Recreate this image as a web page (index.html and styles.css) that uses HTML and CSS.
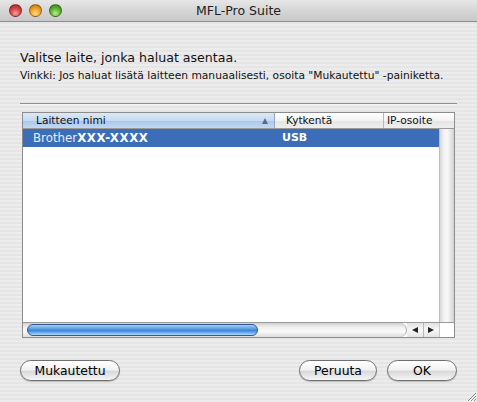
FILE: index.html
```html
<!DOCTYPE html>
<html>
<head>
<meta charset="utf-8">
<link rel="stylesheet" href="styles.css">
</head>
<body>
<div class="window">
  <div class="titlebar">
    <div class="lights">
      <span class="light red"></span>
      <span class="light yellow"></span>
      <span class="light green"></span>
    </div>
    <div class="title">MFL-Pro Suite</div>
  </div>
  <div class="content">
    <h1 class="heading">Valitse laite, jonka haluat asentaa.</h1>
    <p class="hint">Vinkki: Jos haluat lisätä laitteen manuaalisesti, osoita "Mukautettu" -painiketta.</p>
    <div class="sep"></div>
    <div class="table">
      <div class="thead">
        <div class="th sorted"><span>Laitteen nimi</span><span class="sortarrow"></span></div>
        <div class="th">Kytkentä</div>
        <div class="th last">IP-osoite</div>
      </div>
      <div class="tbody">
        <div class="list">
          <div class="row selected">
            <div class="td c1"><span class="light-txt">Brother</span><b>XXX-XXXX</b></div>
            <div class="td c2"><b>USB</b></div>
          </div>
        </div>
        <div class="vscroll"></div>
      </div>
      <div class="hbar">
        <div class="htrack"><div class="thumb"></div></div>
        <div class="arrows">
          <span class="arr left"></span>
          <span class="arr right"></span>
        </div>
        <div class="corner"></div>
      </div>
    </div>
    <div class="buttons">
      <button class="btn custom">Mukautettu</button>
      <div class="spacer"></div>
      <button class="btn cancel">Peruuta</button>
      <button class="btn ok">OK</button>
    </div>
  </div>
  <div class="grip">
    <svg width="12" height="12" viewBox="0 0 12 12">
      <path d="M11 3 L3 11 M11 6 L6 11 M11 9 L9 11" stroke="#8a8a8a" stroke-width="1"/>
      <path d="M11.8 3.8 L3.8 11.8 M11.8 6.8 L6.8 11.8" stroke="#ffffff" stroke-width="0.8"/>
    </svg>
  </div>
</div>
</body>
</html>
```
FILE: styles.css
```css
* { box-sizing: border-box; }
html, body { margin: 0; padding: 0; }
body {
  width: 477px;
  height: 402px;
  overflow: hidden;
  font-family: "DejaVu Sans", "Liberation Sans", sans-serif;
  color: #000;
}
.window {
  position: relative;
  width: 477px;
  height: 402px;
  background: repeating-linear-gradient(180deg, #ececec 0px, #ececec 2px, #e5e5e5 2px, #e5e5e5 4px);
}
.titlebar {
  position: relative;
  height: 22px;
  background: linear-gradient(180deg, #e6e6e6 0%, #d6d6d6 50%, #c8c8c8 100%);
  border-bottom: 1px solid #8e8e8e;
  display: flex;
  align-items: center;
}
.lights {
  display: flex;
  gap: 7px;
  padding-left: 9px;
}
.light {
  width: 13px;
  height: 13px;
  border-radius: 50%;
  border: 1px solid rgba(0,0,0,0.35);
}
.red { background: radial-gradient(circle at 50% 75%, #f7a0a0 0%, #d94b4b 45%, #9e1f22 100%); }
.yellow { background: radial-gradient(circle at 50% 75%, #ffe08a 0%, #f3a52b 45%, #b56a0a 100%); }
.green { background: radial-gradient(circle at 50% 75%, #b8f08c 0%, #63b63a 45%, #2d7a17 100%); }
.title {
  position: absolute;
  left: 0; right: 0; top: 3px;
  text-align: center;
  font-size: 12.5px;
  color: #222;
}
.content {
  padding: 28px 20px 0 20px;
}
.heading {
  margin: 0;
  font-weight: normal;
  font-size: 12.6px;
  line-height: 16px;
  color: #111;
}
.hint {
  margin: 3px 0 0 0;
  font-size: 10.7px;
  line-height: 14px;
  color: #111;
  white-space: nowrap;
}
.sep {
  margin-top: 20px;
  background: #8f8f8f;
  border-bottom: 1px solid #f6f6f6;
  height: 2px;
}
.table {
  margin: 7px 2px 0 2px;
  border: 1px solid #8c8c8c;
  background: #fff;
}
.thead {
  display: grid;
  grid-template-columns: 252px 109px 1fr;
  height: 16px;
  border-bottom: 1px solid #9a9a9a;
}
.th {
  font-size: 10.6px;
  line-height: 15px;
  padding-left: 11px;
  background: linear-gradient(180deg, #ffffff 0%, #f3f3f3 50%, #e4e4e4 51%, #eeeeee 100%);
  border-right: 1px solid #b9b9b9;
  color: #111;
  white-space: nowrap;
}
.th.last { border-right: none; padding-left: 3px; }
.th.sorted {
  display: flex;
  justify-content: space-between;
  align-items: center;
  padding-left: 13px;
  padding-right: 6px;
  background: linear-gradient(180deg, #dbe8f7 0%, #c6daf2 50%, #a9c6ea 51%, #c2d8f3 100%);
  border-right: 1px solid #8fa5c2;
}
.sortarrow {
  width: 0; height: 0;
  border-left: 3.5px solid transparent;
  border-right: 3.5px solid transparent;
  border-bottom: 6px solid #5a6b82;
}
.tbody {
  display: flex;
  height: 193px;
}
.list { flex: 1; }
.vscroll {
  width: 15px;
  background: linear-gradient(90deg, #d8d8d8 0%, #f4f4f4 30%, #f7f7f7 55%, #d2d2d2 100%);
  border-left: 1px solid #bdbdbd;
}
.row {
  display: grid;
  grid-template-columns: 252px 109px 1fr;
  height: 18px;
}
.row.selected { background: #3b6db8; color: #fff; }
.td {
  font-size: 11.8px;
  line-height: 18px;
  white-space: nowrap;
}
.c1 { padding-left: 10px; }
.c1 .light-txt { color: #e8eef8; font-weight: normal; }
.c1 b { letter-spacing: 0.6px; }
.c2 { padding-left: 7px; font-size: 11px; }
.hbar {
  display: flex;
  height: 15px;
  border-top: 1px solid #9a9a9a;
}
.htrack {
  width: 384px;
  padding-left: 4px;
  padding-top: 1px;
  background: linear-gradient(180deg, #d0d0d0 0%, #f0f0f0 30%, #fafafa 60%, #dcdcdc 100%);
  border-radius: 0 8px 8px 0;
  border-right: 1px solid #aaa;
}
.thumb {
  width: 231px;
  height: 12px;
  border-radius: 7px;
  border: 1px solid #2d5a94;
  background: linear-gradient(180deg, #a8cdf2 0%, #6ca8e8 30%, #3f86d8 55%, #7fbdf4 85%, #b6dbfb 100%);
}
.arrows {
  width: 32px;
  display: flex;
  background: linear-gradient(180deg, #e2e2e2 0%, #f7f7f7 50%, #e4e4e4 100%);
}
.arr {
  flex: 1;
  display: flex;
  align-items: center;
  justify-content: center;
}
.arr.left { border-right: 1px solid #b8b8b8; }
.arr.left::before {
  content: "";
  border-top: 3.5px solid transparent;
  border-bottom: 3.5px solid transparent;
  border-right: 6px solid #222;
}
.arr.right::before {
  content: "";
  border-top: 3.5px solid transparent;
  border-bottom: 3.5px solid transparent;
  border-left: 6px solid #222;
}
.corner {
  flex: 1;
  background: #fff;
  border-left: 1px solid #c8c8c8;
}
.buttons {
  display: flex;
  margin-top: 22px;
  gap: 10px;
}
.spacer { flex: 1; }
.btn {
  height: 21px;
  border-radius: 11px;
  border: 1px solid #6f6f6f;
  background: linear-gradient(180deg, #ffffff 0%, #f2f2f2 45%, #dadada 55%, #f4f4f4 100%);
  box-shadow: 0 1px 1px rgba(0,0,0,0.2);
  font-family: "DejaVu Sans", "Liberation Sans", sans-serif;
  font-size: 12.4px;
  color: #000;
  padding: 0;
  line-height: 18px;
}
.custom { width: 100px; }
.cancel { width: 78px; }
.ok { width: 70px; }
.grip {
  position: absolute;
  right: 0;
  bottom: 0;
  width: 12px;
  height: 12px;
}
.grip svg { display: block; }
```
